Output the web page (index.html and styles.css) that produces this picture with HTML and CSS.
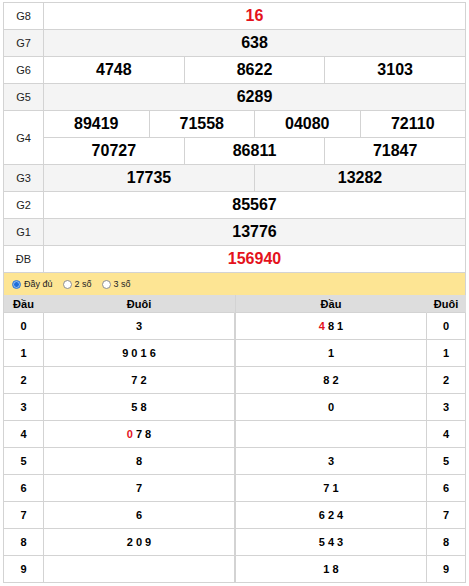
FILE: index.html
```html
<!DOCTYPE html>
<html lang="vi">
<head>
<meta charset="utf-8">
<title>Kết quả xổ số</title>
<link rel="stylesheet" href="styles.css">
</head>
<body>
<div class="page">
  <div class="kq">
    <div class="lbl">G8</div><div class="v c12 red">16</div>
    <div class="lbl alt">G7</div><div class="v c12 alt">638</div>
    <div class="lbl">G6</div><div class="v c4">4748</div><div class="v c4">8622</div><div class="v c4">3103</div>
    <div class="lbl alt">G5</div><div class="v c12 alt">6289</div>
    <div class="lbl r2">G4</div><div class="v c3">89419</div><div class="v c3">71558</div><div class="v c3">04080</div><div class="v c3">72110</div>
    <div class="v c4">70727</div><div class="v c4">86811</div><div class="v c4">71847</div>
    <div class="lbl alt">G3</div><div class="v c6 alt">17735</div><div class="v c6 alt">13282</div>
    <div class="lbl">G2</div><div class="v c12">85567</div>
    <div class="lbl alt">G1</div><div class="v c12 alt">13776</div>
    <div class="lbl">ĐB</div><div class="v c12 red">156940</div>
  </div>

  <div class="opts">
    <label class="opt"><input type="radio" name="mode" checked><span>Đầy đủ</span></label>
    <label class="opt"><input type="radio" name="mode"><span>2 số</span></label>
    <label class="opt"><input type="radio" name="mode"><span>3 số</span></label>
  </div>

  <div class="loto">
    <div class="half left">
      <div class="h">Đầu</div><div class="h">Đuôi</div>
      <div class="d">0</div><div class="n">3</div>
      <div class="d">1</div><div class="n">9 0 1 6</div>
      <div class="d">2</div><div class="n">7 2</div>
      <div class="d">3</div><div class="n">5 8</div>
      <div class="d">4</div><div class="n"><span class="hl">0</span> 7 8</div>
      <div class="d">5</div><div class="n">8</div>
      <div class="d">6</div><div class="n">7</div>
      <div class="d">7</div><div class="n">6</div>
      <div class="d">8</div><div class="n">2 0 9</div>
      <div class="d">9</div><div class="n"></div>
    </div>
    <div class="half right">
      <div class="h">Đầu</div><div class="h">Đuôi</div>
      <div class="n"><span class="hl">4</span> 8 1</div><div class="d">0</div>
      <div class="n">1</div><div class="d">1</div>
      <div class="n">8 2</div><div class="d">2</div>
      <div class="n">0</div><div class="d">3</div>
      <div class="n"></div><div class="d">4</div>
      <div class="n">3</div><div class="d">5</div>
      <div class="n">7 1</div><div class="d">6</div>
      <div class="n">6 2 4</div><div class="d">7</div>
      <div class="n">5 4 3</div><div class="d">8</div>
      <div class="n">1 8</div><div class="d">9</div>
    </div>
  </div>
</div>
</body>
</html>
```

FILE: styles.css
```css
* { box-sizing: border-box; }
html, body { margin: 0; padding: 0; background: #fff; }
body { padding: 2px 3px; font-family: "Liberation Sans", Arial, sans-serif; color: #000; }
.page { width: 463px; }

.kq {
  display: grid;
  grid-template-columns: 40px repeat(12, 1fr);
  grid-auto-rows: 27px;
  border-left: 1px solid #d3d3d3;
  border-top: 1px solid #d3d3d3;
}
.kq > div {
  border-right: 1px solid #d3d3d3;
  border-bottom: 1px solid #d3d3d3;
  display: flex;
  align-items: center;
  justify-content: center;
}
.lbl { grid-column: 1; font-size: 11px; color: #222; }
.lbl.r2 { grid-row: span 2; }
.v { font-size: 16px; font-weight: bold; }
.c12 { grid-column: span 12; }
.c6 { grid-column: span 6; }
.c4 { grid-column: span 4; }
.c3 { grid-column: span 3; }
.alt { background: #f4f4f4; }
.red { color: #e4121c; }

.opts {
  height: 22px;
  background: #fde594;
  border-left: 1px solid #d3d3d3;
  border-right: 1px solid #d3d3d3;
  display: flex;
  align-items: center;
  padding-left: 8px;
  gap: 10px;
  font-size: 9px;
  color: #222;
}
.opt { display: flex; align-items: center; gap: 3px; }
.opt input {
  appearance: none;
  -webkit-appearance: none;
  margin: 0;
  width: 9px;
  height: 9px;
  border-radius: 50%;
  border: 1px solid #8d8d8d;
  background: #fff;
}
.opt input:checked {
  border-color: #2a74d6;
  background: radial-gradient(circle, #1f6fd9 0 2px, #7fb0ee 2.6px);
}

.loto { display: flex; }
.half {
  display: grid;
  grid-auto-rows: 27px;
  grid-template-rows: 18px;
  border-left: 1px solid #d3d3d3;
}
.half.left { width: 232px; grid-template-columns: 40px 191px; }
.half.right { width: 231px; grid-template-columns: 191px 39px; }
.half > div {
  border-right: 1px solid #d3d3d3;
  border-bottom: 1px solid #d3d3d3;
  display: flex;
  align-items: center;
  justify-content: center;
  font-size: 11px;
  font-weight: bold;
  white-space: pre;
}
.half > .h { background: #dddddd; border-right-color: #dddddd; }
.half > .h:last-child { border-right-color: #d3d3d3; }
.hl { color: #e4121c; }
```
